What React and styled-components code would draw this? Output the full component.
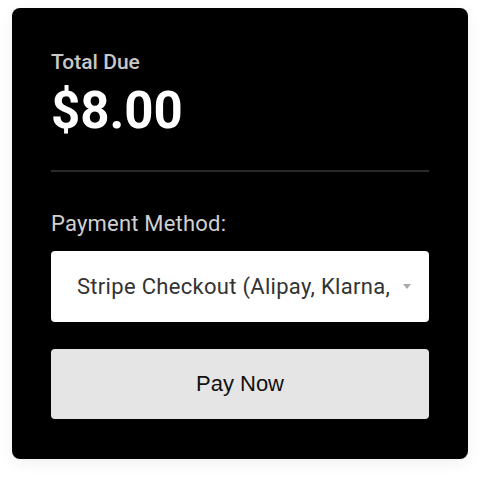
import React from 'react';
import styled, { createGlobalStyle } from 'styled-components';

const GlobalStyle = createGlobalStyle`
  body {
    margin: 0;
    background: #fff;
    font-family: Roboto, "Liberation Sans", sans-serif;
  }
`;

export default function App() {
  return (
    <Page>
      <GlobalStyle />
      <Card>
        <Label>Total Due</Label>
        <Amount>$8.00</Amount>
        <Divider />
        <FieldLabel>Payment Method:</FieldLabel>
        <SelectBox>
          <SelectText>Stripe Checkout (Alipay, Klarna,</SelectText>
          <Caret />
        </SelectBox>
        <PayButton>Pay Now</PayButton>
      </Card>
    </Page>
  );
}

const Page = styled.div`
  padding: 8px 12px 22px;
`;

const Card = styled.div`
  background: #000;
  border-radius: 8px;
  padding: 42px 39px 40px;
  box-shadow: 0 4px 16px rgba(0, 0, 0, 0.06);
  display: flex;
  flex-direction: column;
`;

const Label = styled.div`
  color: #c8c8c8;
  font-size: 21px;
  font-weight: 500;
  line-height: 24px;
`;

const Amount = styled.div`
  color: #fff;
  font-size: 51px;
  font-weight: 700;
  line-height: 58px;
  margin-top: 8px;
`;

const Divider = styled.div`
  height: 2px;
  background: #2a2a2a;
  margin: 30px 0 38px;
`;

const FieldLabel = styled.div`
  color: #d0d0d0;
  font-size: 22px;
  line-height: 28px;
  letter-spacing: 0.2px;
  margin-bottom: 13px;
`;

const SelectBox = styled.div`
  background: #fff;
  border-radius: 4px;
  height: 71px;
  display: flex;
  align-items: center;
  padding: 0 18px 0 26px;
  margin-bottom: 27px;
`;

const SelectText = styled.span`
  flex: 1;
  color: #333;
  font-size: 22px;
  letter-spacing: 0.3px;
  white-space: nowrap;
`;

const Caret = styled.span`
  width: 0;
  height: 0;
  border-left: 4px solid transparent;
  border-right: 4px solid transparent;
  border-top: 5px solid #aaa;
  margin-left: 10px;
`;

const PayButton = styled.button`
  height: 70px;
  border: none;
  border-radius: 4px;
  background: #e5e5e5;
  color: #111;
  font-family: "Liberation Sans", Arial, sans-serif;
  font-size: 22px;
  cursor: pointer;
`;
